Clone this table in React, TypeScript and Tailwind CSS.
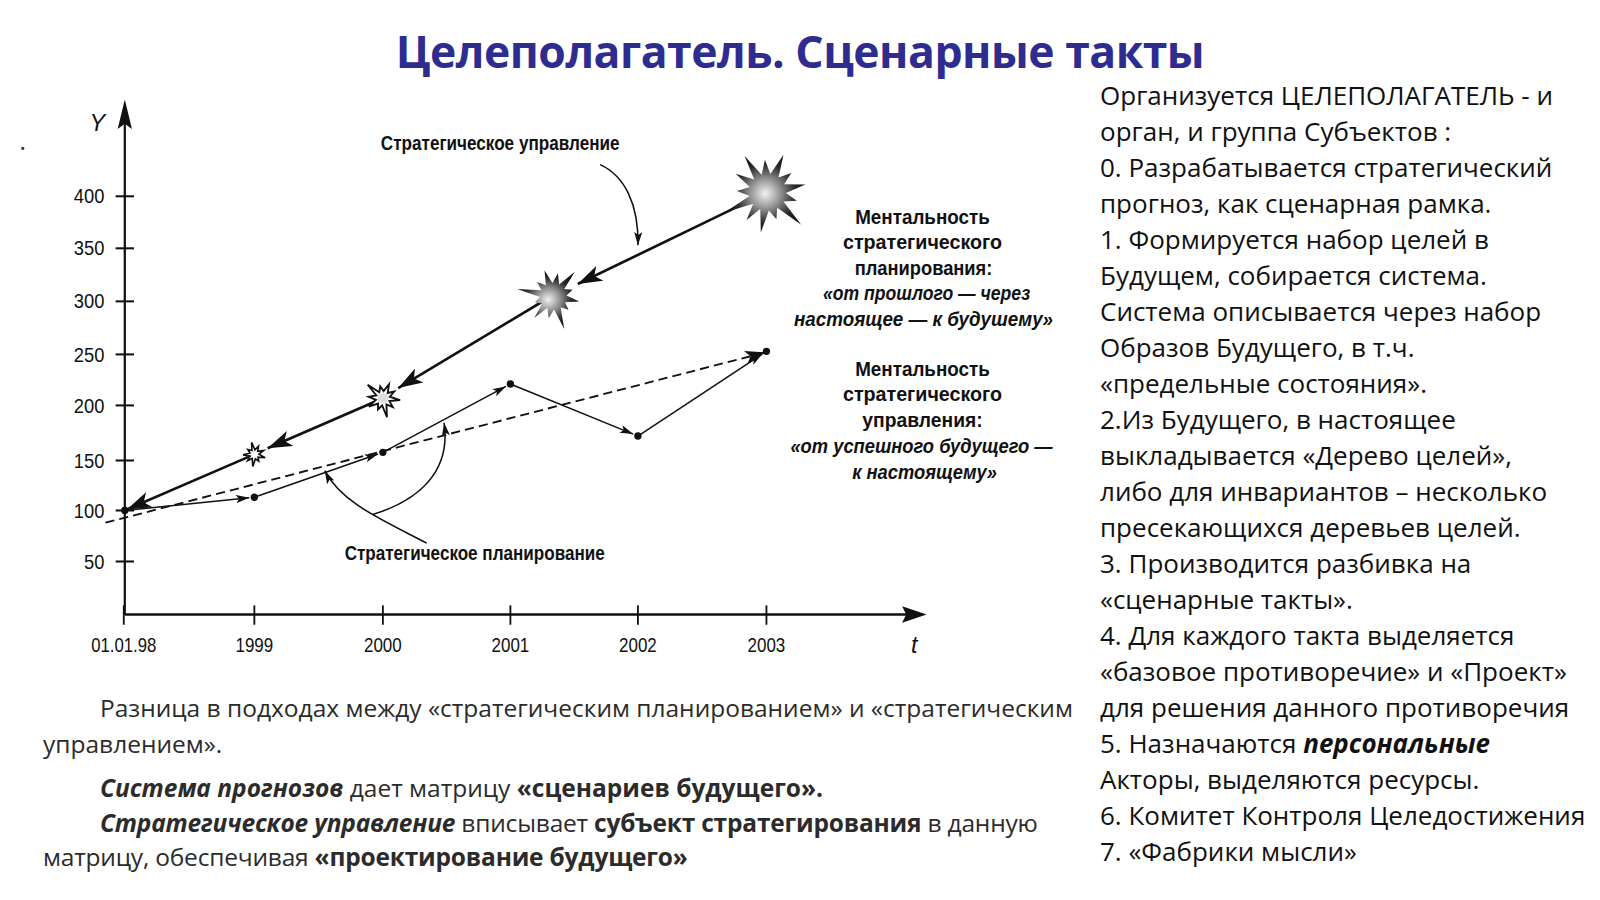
import React from 'react';

const rightLines: React.ReactNode[] = [
  'Организуется ЦЕЛЕПОЛАГАТЕЛЬ - и',
  'орган, и группа Субъектов :',
  '0. Разрабатывается стратегический',
  'прогноз, как сценарная рамка.',
  '1. Формируется набор целей в',
  'Будущем, собирается система.',
  'Система описывается через набор',
  'Образов Будущего, в т.ч.',
  '«предельные состояния».',
  '2.Из Будущего, в настоящее',
  'выкладывается  «Дерево целей»,',
  'либо для инвариантов – несколько',
  'пресекающихся деревьев целей.',
  '3. Производится разбивка на',
  '«сценарные такты».',
  '4. Для каждого такта выделяется',
  '«базовое противоречие» и «Проект»',
  'для решения данного противоречия',
  <>
    5. Назначаются <b className="italic">персональные</b>
  </>,
  'Акторы, выделяются ресурсы.',
  '6. Комитет Контроля Целедостижения',
  '7. «Фабрики мысли»',
];

// star outline with uneven spikes
function star(cx: number, cy: number, outer: number[], inner: number, rot = 0) {
  const n = outer.length;
  const pts: string[] = [];
  for (let i = 0; i < n; i++) {
    const a = rot + (i / n) * Math.PI * 2;
    const b = rot + ((i + 0.5) / n) * Math.PI * 2;
    pts.push(`${(cx + Math.cos(a) * outer[i]).toFixed(1)},${(cy + Math.sin(a) * outer[i]).toFixed(1)}`);
    pts.push(`${(cx + Math.cos(b) * inner).toFixed(1)},${(cy + Math.sin(b) * inner).toFixed(1)}`);
  }
  return pts.join(' ');
}

const yTicks = [
  { v: '400', y: 192 },
  { v: '350', y: 243 },
  { v: '300', y: 295 },
  { v: '250', y: 347 },
  { v: '200', y: 397 },
  { v: '150', y: 451 },
  { v: '100', y: 500 },
  { v: '50', y: 550 },
];

const xTicks = [
  { v: '01.01.98', x: 121, w: 64 },
  { v: '1999', x: 249, w: 37 },
  { v: '2000', x: 375, w: 37 },
  { v: '2001', x: 500, w: 37 },
  { v: '2002', x: 625, w: 37 },
  { v: '2003', x: 751, w: 37 },
];

const planDots: [number, number][] = [
  [122, 500],
  [249, 487],
  [375, 443],
  [500, 376],
  [625, 427],
  [751, 344],
];

function Chart() {
  return (
    <svg width={1082} height={609} viewBox="0 78 1060 597" className="block" fontFamily='"Liberation Sans", Arial, sans-serif'>
      <defs>
        <marker id="bh" markerUnits="userSpaceOnUse" markerWidth={24} markerHeight={16} viewBox="0 0 24 16" refX={24} refY={8} orient="auto">
          <path d="M0,0 L24,8 L0,16 L6,8 Z" fill="#111" />
        </marker>
        <marker id="th" markerUnits="userSpaceOnUse" markerWidth={13} markerHeight={8} viewBox="0 0 13 8" refX={13} refY={4} orient="auto">
          <path d="M0,0 L13,4 L0,8 L3,4 Z" fill="#111" />
        </marker>
        <marker id="dh" markerUnits="userSpaceOnUse" markerWidth={20} markerHeight={13} viewBox="0 0 20 13" refX={20} refY={6.5} orient="auto">
          <path d="M0,0 L20,6.5 L0,13 L5,6.5 Z" fill="#111" />
        </marker>
        <radialGradient id="sg" cx="50%" cy="50%" r="50%">
          <stop offset="0%" stopColor="#f2f2f2" />
          <stop offset="35%" stopColor="#9a9a9a" />
          <stop offset="75%" stopColor="#2a2a2a" />
          <stop offset="100%" stopColor="#111" />
        </radialGradient>
      </defs>

      {/* speck */}
      <circle cx={22} cy={145} r={1.5} fill="#333" />

      {/* axes */}
      <line x1={122} y1={602} x2={122} y2={118} stroke="#111" strokeWidth={2.2} />
      <path d="M122,97 L129,126 L122,121 L115,126 Z" fill="#111" />
      <line x1={122} y1={602} x2={890} y2={602} stroke="#111" strokeWidth={2.4} />
      <path d="M908,602 L884,594 L888,602 L884,610 Z" fill="#111" />
      <text x={95} y={128} fontSize={23} fontStyle="italic" textAnchor="middle" fill="#111">Y</text>
      <text x={896} y={640} fontSize={23} fontStyle="italic" textAnchor="middle" fill="#111">t</text>

      {yTicks.map(t => (
        <g key={t.v}>
          <line x1={113} y1={t.y} x2={131} y2={t.y} stroke="#111" strokeWidth={2} />
          <text x={102} y={t.y + 7} fontSize={19} textAnchor="end" textLength={t.v.length * 10} lengthAdjust="spacingAndGlyphs" fill="#111">{t.v}</text>
        </g>
      ))}
      {xTicks.map(t => (
        <g key={t.v}>
          <line x1={t.x} y1={593} x2={t.x} y2={612} stroke="#111" strokeWidth={1.8} />
          <text x={t.x} y={639} fontSize={19} textAnchor="middle" textLength={t.w} lengthAdjust="spacingAndGlyphs" fill="#111">{t.v}</text>
        </g>
      ))}

      {/* dashed trend */}
      <line x1={103} y1={512} x2={750} y2={345} stroke="#111" strokeWidth={1.8} strokeDasharray="9 5" markerEnd="url(#dh)" />

      {/* planning line */}
      {planDots.slice(1).map((p, i) => {
        const a = planDots[i];
        const dx = p[0] - a[0];
        const dy = p[1] - a[1];
        const len = Math.hypot(dx, dy);
        const k = (len - 5) / len;
        return (
          <line key={i} x1={a[0]} y1={a[1]} x2={a[0] + dx * k} y2={a[1] + dy * k} stroke="#111" strokeWidth={1.5} markerEnd="url(#th)" />
        );
      })}
      {planDots.map((p, i) => (
        <circle key={i} cx={p[0]} cy={p[1]} r={3.6} fill="#111" />
      ))}

      {/* management line */}
      <line x1={249} y1={445} x2={124} y2={499} stroke="#111" strokeWidth={2.6} markerEnd="url(#bh)" />
      <line x1={375} y1={390} x2={262} y2={439} stroke="#111" strokeWidth={2.6} markerEnd="url(#bh)" />
      <line x1={540} y1={290} x2={390} y2={380} stroke="#111" strokeWidth={2.6} markerEnd="url(#bh)" />
      <line x1={752} y1={188} x2={566} y2={278} stroke="#111" strokeWidth={2.6} markerEnd="url(#bh)" />

      {/* stars */}
      <polygon points={star(249, 445, [11, 8, 12, 9, 11, 8, 12, 9, 10], 4.5, 0.3)} fill="#fff" stroke="#111" strokeWidth={1.6} />
      <polygon points={star(375, 390, [17, 13, 19, 12, 16, 14, 20, 12, 15, 13], 7, 0.1)} fill="#fff" stroke="#111" strokeWidth={1.8} />
      <circle cx={375} cy={390} r={5} fill="#ddd" />
      <polygon points={star(542, 290, [26, 20, 34, 22, 28, 19, 36, 21, 27, 23, 32, 20], 13, 0.2)} fill="url(#sg)" />
      <polygon points={star(752, 188, [38, 30, 46, 28, 40, 34, 46, 30, 36, 42, 32, 40, 30], 18, -0.2)} fill="url(#sg)" />

      {/* pointer curves */}
      <path d="M588,161 C612,172 626,200 625,240" fill="none" stroke="#111" strokeWidth={1.5} markerEnd="url(#th)" />
      <path d="M418,532 C372,508 334,492 318,461" fill="none" stroke="#111" strokeWidth={1.5} markerEnd="url(#th)" />
      <path d="M365,504 C410,490 442,462 435,414" fill="none" stroke="#111" strokeWidth={1.5} markerEnd="url(#th)" />

      {/* labels */}
      <text x={490} y={147} fontSize={19} fontWeight="bold" textAnchor="middle" textLength={234} lengthAdjust="spacingAndGlyphs" fill="#111">Стратегическое управление</text>
      <text x={465} y={549} fontSize={19} fontWeight="bold" textAnchor="middle" textLength={255} lengthAdjust="spacingAndGlyphs" fill="#111">Стратегическое планирование</text>

      <g fontSize={20} fontWeight="bold" fill="#111">
        <text x={904} y={219} textAnchor="middle" textLength={132} lengthAdjust="spacingAndGlyphs">Ментальность</text>
        <text x={904} y={244} textAnchor="middle" textLength={156} lengthAdjust="spacingAndGlyphs">стратегического</text>
        <text x={905} y={269} textAnchor="middle" textLength={135} lengthAdjust="spacingAndGlyphs">планирования:</text>
        <text x={908} y={294} textAnchor="middle" fontStyle="italic" textLength={203} lengthAdjust="spacingAndGlyphs">«от прошлого — через</text>
        <text x={905} y={319} textAnchor="middle" fontStyle="italic" textLength={254} lengthAdjust="spacingAndGlyphs">настоящее —  к будушему»</text>

        <text x={904} y={368} textAnchor="middle" textLength={132} lengthAdjust="spacingAndGlyphs">Ментальность</text>
        <text x={904} y={393} textAnchor="middle" textLength={156} lengthAdjust="spacingAndGlyphs">стратегического</text>
        <text x={904} y={418} textAnchor="middle" textLength={118} lengthAdjust="spacingAndGlyphs">управления:</text>
        <text x={903} y={444} textAnchor="middle" fontStyle="italic" textLength={257} lengthAdjust="spacingAndGlyphs">«от успешного будущего —</text>
        <text x={906} y={469} textAnchor="middle" fontStyle="italic" textLength={142} lengthAdjust="spacingAndGlyphs">к настоящему»</text>
      </g>
    </svg>
  );
}

export default function App() {
  return (
    <div className="w-[1600px] h-[900px] bg-white overflow-hidden font-['Open_Sans',sans-serif]">
      <h1 className="h-[80px] pt-[22px] text-center text-[44.5px] leading-[58px] font-bold text-[#2e2d8f] tracking-[-0.5px]">
        Целеполагатель. Сценарные такты
      </h1>
      <div className="flex">
        <div className="w-[1082px] shrink-0">
          <Chart />
          <div className="pl-[43px] pt-[1px] text-[24.5px] text-[#2b2b2b] whitespace-nowrap">
            <p className="indent-[57px] leading-[36px]">
              Разница в подходах между «стратегическим планированием» и «стратегическим
              <br />
              управлением».
            </p>
            <p className="indent-[57px] leading-[34.5px] mt-[9px]">
              <b className="italic">Система прогнозов</b> дает матрицу <b>«сценариев будущего».</b>
            </p>
            <p className="indent-[57px] leading-[34.5px] tracking-[-0.2px]">
              <b className="italic">Стратегическое управление</b> вписывает <b>субъект стратегирования</b> в данную
              <br />
              матрицу, обеспечивая <b>«проектирование будущего»</b>
            </p>
          </div>
        </div>
        <div className="pl-[18px] -mt-[3px] text-[26px] leading-[36px] text-[#111] whitespace-nowrap">
          {rightLines.map((l, i) => (
            <div key={i}>{l}</div>
          ))}
        </div>
      </div>
    </div>
  );
}
